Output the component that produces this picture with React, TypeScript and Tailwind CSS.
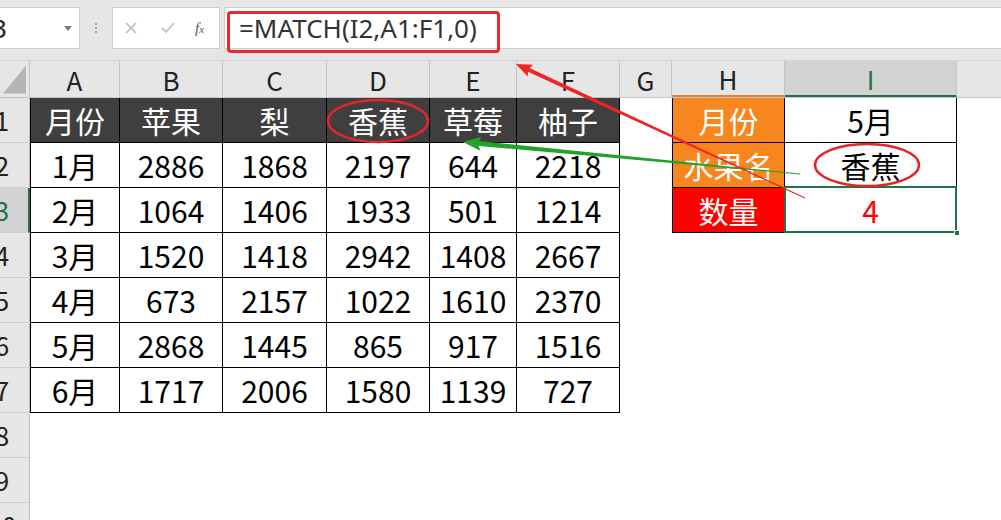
import React from "react";

const COLS = [
  { key: "A", w: "w-[90px]" },
  { key: "B", w: "w-[103px]" },
  { key: "C", w: "w-[104px]" },
  { key: "D", w: "w-[103px]" },
  { key: "E", w: "w-[87px]" },
  { key: "F", w: "w-[103px]" },
  { key: "G", w: "w-[52px]" },
  { key: "H", w: "w-[113px]" },
  { key: "I", w: "w-[172px]" },
];

const TABLE = [
  ["月份", "苹果", "梨", "香蕉", "草莓", "柚子"],
  ["1月", "2886", "1868", "2197", "644", "2218"],
  ["2月", "1064", "1406", "1933", "501", "1214"],
  ["3月", "1520", "1418", "2942", "1408", "2667"],
  ["4月", "673", "2157", "1022", "1610", "2370"],
  ["5月", "2868", "1445", "865", "917", "1516"],
  ["6月", "1717", "2006", "1580", "1139", "727"],
];

const LOOKUP = [
  { label: "月份", value: "5月", fill: "bg-[#f7861e]" },
  { label: "水果名", value: "香蕉", fill: "bg-[#f7861e]" },
  { label: "数量", value: "4", fill: "bg-[#ff0000]" },
];

const ROWS = [1, 2, 3, 4, 5, 6, 7, 8, 9, 10];

// tapered arrow: thin at the tail, wide at the tip
function arrowPoints(x1: number, y1: number, x2: number, y2: number, w0: number, w1: number, hl: number, hw: number) {
  const dx = x2 - x1;
  const dy = y2 - y1;
  const len = Math.hypot(dx, dy);
  const ux = dx / len;
  const uy = dy / len;
  const nx = -uy;
  const ny = ux;
  const bx = x2 - ux * hl;
  const by = y2 - uy * hl;
  const pts = [
    [x1 + nx * w0, y1 + ny * w0],
    [bx + nx * w1, by + ny * w1],
    [bx + nx * hw - ux * 2, by + ny * hw - uy * 2],
    [x2, y2],
    [bx - nx * hw - ux * 2, by - ny * hw - uy * 2],
    [bx - nx * w1, by - ny * w1],
    [x1 - nx * w0, y1 - ny * w0],
  ];
  return pts.map((p) => p[0].toFixed(1) + "," + p[1].toFixed(1)).join(" ");
}

function Cell({ row, col }: { row: number; col: number }) {
  const w = COLS[col].w;
  const base = `${w} h-full shrink-0 flex items-center justify-center`;

  if (col <= 5 && row <= 7) {
    const text = TABLE[row - 1][col];
    const head = row === 1;
    return (
      <div
        className={`${base} border-b border-r border-black ${col === 0 ? "border-l" : ""} ${
          head ? "bg-[#3f3f3f] text-white" : "bg-white text-black"
        }`}
      >
        {text}
      </div>
    );
  }

  if (col === 7 && row <= 3) {
    const item = LOOKUP[row - 1];
    return (
      <div className={`${base} ${item.fill} text-white border-b border-r border-l border-black`}>
        {item.label}
      </div>
    );
  }

  if (col === 8 && row <= 3) {
    const item = LOOKUP[row - 1];
    return (
      <div className={`${base} relative bg-white border-b border-r border-black ${row === 3 ? "text-[#ff0000]" : "text-black"}`}>
        {item.value}
        {row === 3 && (
          <>
            <div className="absolute -left-[1px] -top-[2px] -right-[1px] -bottom-[1px] border-2 border-[#217346]" />
            <div className="absolute -right-[4px] -bottom-[4px] w-[6px] h-[6px] bg-[#217346] border border-white" />
          </>
        )}
      </div>
    );
  }

  return <div className={`${base}`} />;
}

export default function App() {
  return (
    <div className="relative w-[1001px] h-[520px] overflow-hidden bg-white font-['Noto_Sans_CJK_SC',sans-serif]">
      {/* formula bar */}
      <div className="flex h-[61px] bg-[#e6e6e6] pt-[7px] pb-[11px] border-b border-[#d4d4d4]">
        <div className="w-[80px] h-full bg-white border border-l-0 border-[#cfcfcf] flex items-center overflow-hidden">
          <span className="-ml-[8px] text-[26px] text-[#222] font-['Noto_Sans',sans-serif] leading-none">3</span>
          <span className="ml-auto mr-[7px] w-0 h-0 border-l-[4px] border-r-[4px] border-t-[5px] border-l-transparent border-r-transparent border-t-[#7a7a7a]" />
        </div>
        <div className="w-[32px] flex flex-col items-center justify-center gap-[2px]">
          <span className="w-[2px] h-[2px] bg-[#a8a8a8]" />
          <span className="w-[2px] h-[2px] bg-[#a8a8a8]" />
          <span className="w-[2px] h-[2px] bg-[#a8a8a8]" />
        </div>
        <div className="w-[108px] h-full bg-white border border-[#cfcfcf] flex items-center text-[#b8b8b8]">
          <svg className="ml-[12px]" width="12" height="12" viewBox="0 0 12 12">
            <path d="M1 1 L11 11 M11 1 L1 11" stroke="#bdbdbd" strokeWidth="1.6" />
          </svg>
          <svg className="ml-[24px]" width="14" height="12" viewBox="0 0 14 12">
            <path d="M1 6 L5 10 L13 1" stroke="#c2c2c2" strokeWidth="1.8" fill="none" />
          </svg>
          <span className="ml-[20px] italic text-[15px] text-[#555] font-['Liberation_Serif',serif]">
            f<span className="text-[11px]">x</span>
          </span>
        </div>
        <div className="w-[4px]" />
        <div className="flex-1 h-full bg-white border border-r-0 border-[#cfcfcf] flex items-center">
          <span className="ml-[14px] text-[26px] text-[#333] font-['Noto_Sans',sans-serif] leading-none">
            =MATCH(I2,A1:F1,0)
          </span>
        </div>
      </div>

      {/* column headers */}
      <div className="flex h-[37px] bg-[#e6e6e6] border-b border-[#c4c4c4] text-[26px] text-[#222]">
        <div className="w-[30px] shrink-0 h-full border-r border-[#c4c4c4] flex items-end justify-end p-[3px]">
          <svg width="24" height="29" viewBox="0 0 24 29">
            <polygon points="24,0 24,29 0,29" fill="#b5b5b5" />
          </svg>
        </div>
        {COLS.map((c) => (
          <div
            key={c.key}
            className={`${c.w} shrink-0 h-full flex items-center justify-center border-r border-[#c4c4c4] ${
              c.key === "I" ? "bg-[#d2d2d2] text-[#217346] border-b-2 border-b-[#217346]" : ""
            } ${c.key === "H" ? "border-b-2 border-b-[#d9843a]" : ""}`}
          >
            {c.key}
          </div>
        ))}
        <div className="flex-1" />
      </div>

      {/* rows */}
      <div className="text-[30px] leading-none">
        {ROWS.map((r) => (
          <div key={r} className="flex h-[45px]">
            <div
              className={`w-[30px] shrink-0 h-full overflow-hidden flex items-center border-b border-[#cfcfcf] text-[26px] ${
                r === 3
                  ? "bg-[#d2d2d2] text-[#217346] border-r-2 border-r-[#217346]"
                  : "bg-[#e6e6e6] text-[#222] border-r border-r-[#bdbdbd]"
              }`}
            >
              <span className="-ml-[13px] w-[30px] shrink-0 text-center">{r}</span>
            </div>
            {COLS.map((c, i) => (
              <Cell key={c.key} row={r} col={i} />
            ))}
            <div className="flex-1" />
          </div>
        ))}
      </div>

      {/* annotations */}
      <div className="absolute left-[227px] top-[11px] w-[273px] h-[42px] rounded-[4px] border-[3px] border-[#e62a2a]" />
      <svg className="absolute left-0 top-0 pointer-events-none" width="1001" height="520" viewBox="0 0 1001 520">
        <ellipse cx="378" cy="121" rx="50" ry="21" fill="none" stroke="#e3262a" strokeWidth="2.5" />
        <ellipse cx="867" cy="165" rx="52" ry="21" fill="none" stroke="#e3262a" strokeWidth="2.5" />
        <polygon points={arrowPoints(800, 174, 463, 142, 0.4, 2.4, 16, 7)} fill="#22a22a" />
        <polygon points={arrowPoints(805, 198, 516, 64, 0.4, 2, 14, 6.5)} fill="#f02424" />
      </svg>
    </div>
  );
}
